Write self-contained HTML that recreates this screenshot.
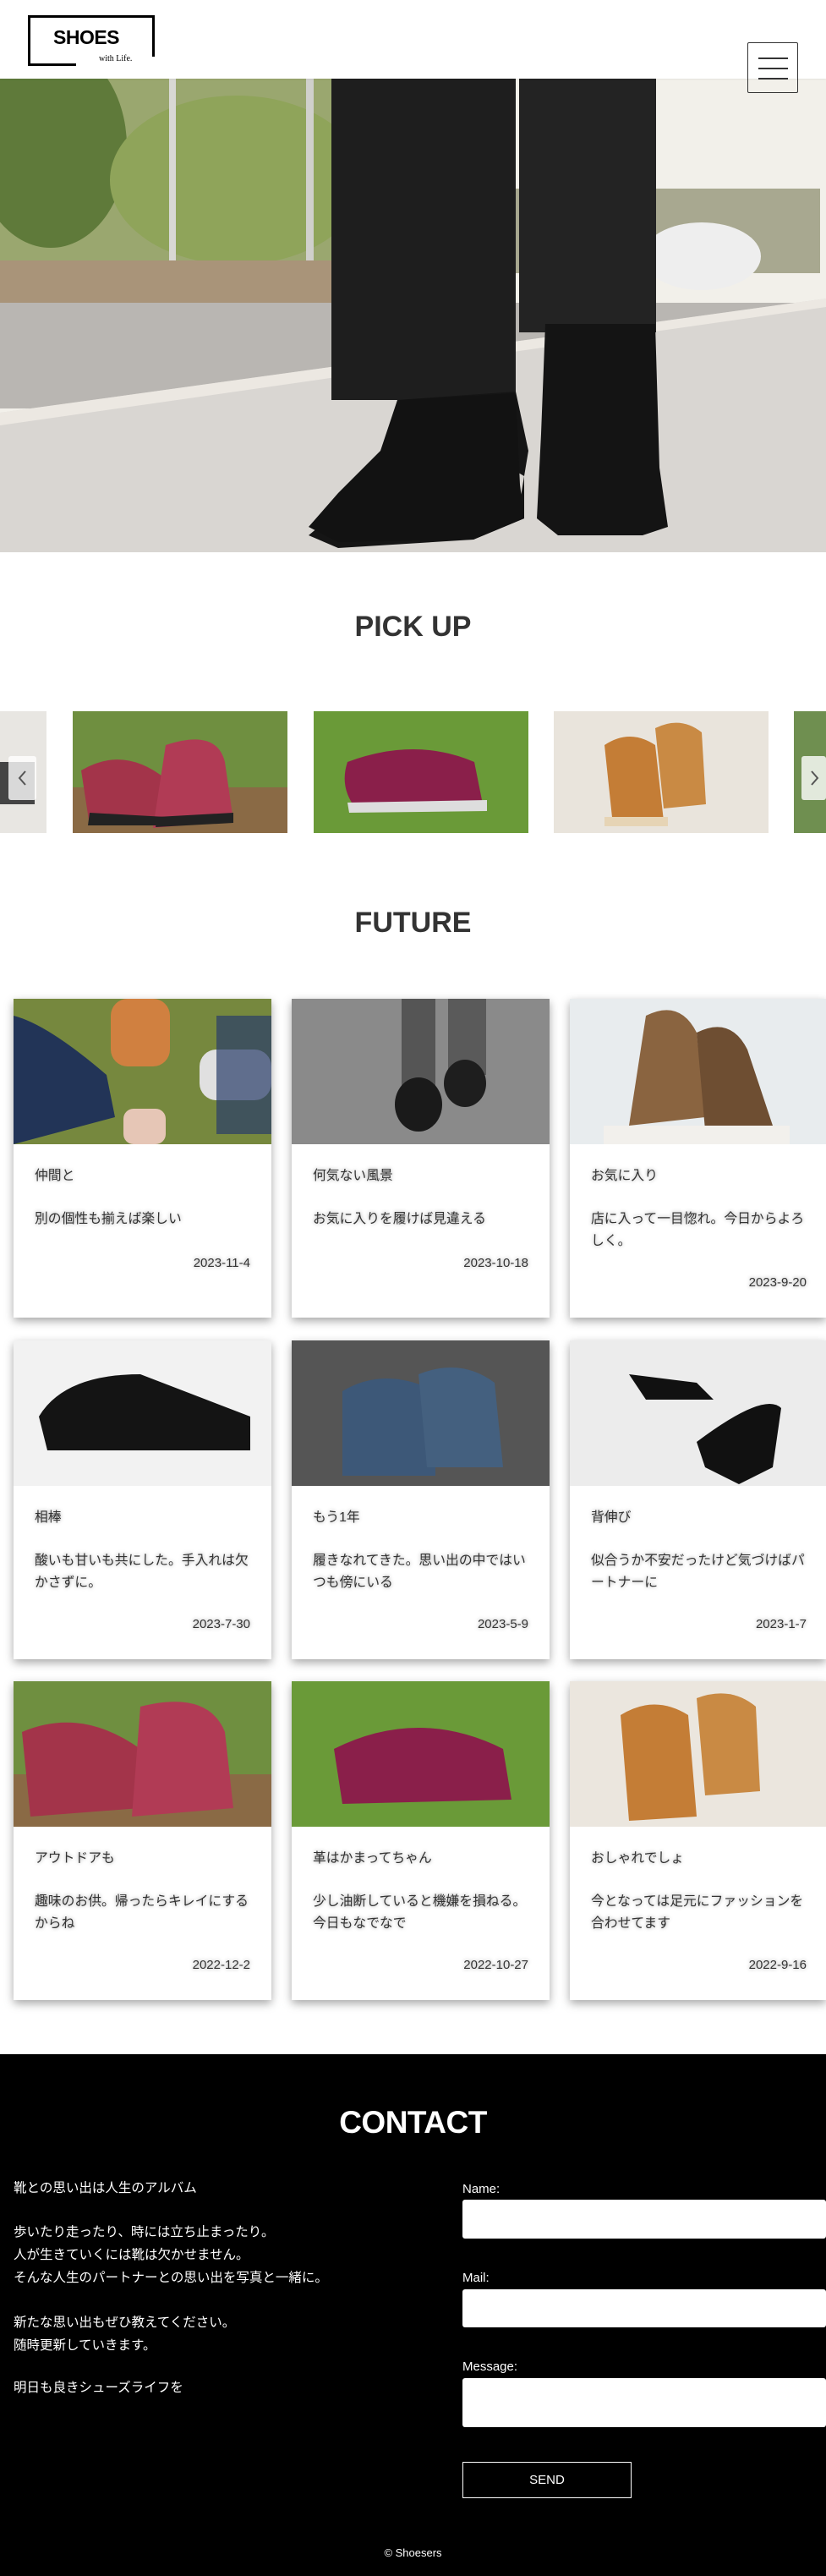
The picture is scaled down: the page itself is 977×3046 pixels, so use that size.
<!DOCTYPE html>
<html><head><meta charset="utf-8">
<style>
*{margin:0;padding:0;box-sizing:border-box}
html,body{width:977px;height:3046px;overflow:hidden}
body{background:#fff;font-family:"Liberation Sans","Noto Sans CJK JP",sans-serif;color:#333;position:relative}
.abs{position:absolute}
header{position:absolute;left:0;top:0;width:977px;height:93px;background:#fff;z-index:3;box-shadow:0 1px 2px rgba(0,0,0,.06)}
.logo{position:absolute;left:33px;top:18px;width:150px;height:60px}
.logo .t{position:absolute;left:0;top:0;width:150px;height:49px;border-top:3px solid #000;border-left:3px solid #000;border-right:3px solid #000}
.logo .b{position:absolute;left:0;top:46px;width:57px;border-left:3px solid #000;height:14px;border-bottom:3px solid #000}
.logo .s{position:absolute;left:30px;top:13px;font-size:23px;font-weight:bold;color:#000;letter-spacing:-0.5px}
.logo .w{position:absolute;left:84px;top:46px;font-family:"Liberation Serif",serif;font-size:10px;color:#000}
.ham{position:absolute;left:884px;top:50px;width:60px;height:60px;border:1px solid #333;border-radius:2px}
.ham i{position:absolute;left:12px;width:35px;height:2px;background:#333}
h2{position:absolute;left:0;width:977px;text-align:center;font-size:34px;font-weight:bold;color:#333}
.sl{position:absolute;top:841px;height:144px;width:254px;overflow:hidden}
.arrow{position:absolute;top:894px;width:33px;height:52px;background:rgba(255,255,255,.8);border-radius:3px}
.card{position:absolute;width:305px;height:377px;background:#fff;box-shadow:0 4px 10px rgba(0,0,0,.35);overflow:hidden}
.card .img{height:172px;overflow:hidden}
.card p{position:absolute;left:25px;font-size:15.8px;color:#333;text-shadow:0 0 5px rgba(0,0,0,.4);line-height:26px;width:256px}
.card .d{right:25px;left:auto;text-align:right;width:auto;font-size:15px}
footer{position:absolute;left:0;top:2429px;width:977px;height:617px;background:#000;color:#fff;overflow:hidden}
.ft{position:absolute;left:16px;font-size:15.5px;color:#fff;line-height:27px}
.lab{position:absolute;left:547px;font-size:15px;color:#fff}
.inp{position:absolute;left:547px;width:430px;background:#fff;border-radius:3px}
</style></head><body>
<header>
 <div class="logo"><div class="t"></div><div class="b"></div><div class="s">SHOES</div><div class="w">with Life.</div></div>
 <div class="ham"><i style="top:17px"></i><i style="top:29px"></i><i style="top:41px"></i></div>
</header>

<svg class="abs" style="left:0;top:93px" width="977" height="560" viewBox="0 0 977 560">
 <rect width="977" height="560" fill="#f2f0ea"/>
 <rect y="0" width="440" height="215" fill="#9aa76f"/>
 <ellipse cx="60" cy="80" rx="90" ry="120" fill="#5f7a3a"/>
 <ellipse cx="280" cy="120" rx="150" ry="100" fill="#8fa45a"/>
 <rect x="200" y="0" width="8" height="215" fill="#d8d8d4"/>
 <rect x="362" y="0" width="9" height="215" fill="#d0d0cc"/>
 <rect x="590" y="130" width="380" height="100" fill="#a8a890"/>
 <ellipse cx="830" cy="210" rx="70" ry="40" fill="#eeeeee"/>
 <rect y="215" width="440" height="50" fill="#a99479"/>
 <rect y="265" width="977" height="125" fill="#b9b6b2"/>
 <polygon points="0,395 977,260 977,560 0,560" fill="#d9d6d2"/>
 <polygon points="0,395 977,260 977,270 0,410" fill="#ece8e2"/>
 <rect x="392" y="0" width="218" height="380" fill="#1e1e1e"/>
 <rect x="614" y="0" width="162" height="300" fill="#232323"/>
 <path d="M470 380 L610 370 L625 440 L615 500 L395 515 L365 540 L400 555 L560 545 L620 520 L620 470 Z" fill="#151515"/>
 <path d="M645 290 L775 290 L780 460 L790 530 L760 540 L660 540 L635 520 L640 420 Z" fill="#141414"/>
 <path d="M470 380 L610 372 L615 480 L620 520 L560 545 L400 548 L365 530 L400 490 L450 440 Z" fill="#121212"/>
</svg>

<h2 style="top:722px">PICK UP</h2>
<div class="sl" style="left:-199px"><svg width="254" height="144"><rect width="254" height="144" fill="#e8e6e2"/><rect x="180" y="60" width="60" height="50" fill="#444"/></svg></div>
<div class="sl" style="left:86px"><svg width="254" height="144"><rect width="254" height="144" fill="#6f8f40"/><rect y="90" width="254" height="54" fill="#8a6a45"/><path d="M10 70 Q60 40 110 80 L115 130 L20 135 Z" fill="#a3344a"/><path d="M110 40 Q170 20 180 60 L190 130 L95 138 Z" fill="#b13b55"/><path d="M20 120 L110 125 L112 135 L18 135Z" fill="#222"/><path d="M100 125 L190 120 L190 132 L98 137Z" fill="#222"/></svg></div>
<div class="sl" style="left:371px"><svg width="254" height="144"><rect width="254" height="144" fill="#6a9a38"/><path d="M40 60 Q120 30 190 60 L200 110 L50 115 Q30 90 40 60Z" fill="#8a1f4a"/><path d="M40 108 L205 105 L205 118 L42 120Z" fill="#ddd"/></svg></div>
<div class="sl" style="left:655px"><svg width="254" height="144"><rect width="254" height="144" fill="#e9e4dc"/><path d="M60 40 Q90 20 120 40 L130 130 L70 135Z" fill="#c47d36"/><path d="M120 20 Q150 5 175 25 L180 110 L130 115Z" fill="#c98a44"/><path d="M60 125 L135 125 L135 136 L60 136Z" fill="#e6d4b5"/></svg></div>
<div class="sl" style="left:939px;width:38px"><svg width="38" height="144"><rect width="38" height="144" fill="#6f8f50"/></svg></div>
<div class="arrow" style="left:10px"><svg width="33" height="52"><path d="M20 18 L13 26 L20 34" stroke="#555" stroke-width="2" fill="none"/></svg></div>
<div class="arrow" style="left:948px;width:29px"><svg width="29" height="52"><path d="M12 18 L19 26 L12 34" stroke="#555" stroke-width="2" fill="none"/></svg></div>

<h2 style="top:1072px">FUTURE</h2>

<div class="card" style="left:16px;top:1181px"><div class="img"><svg width="305" height="172"><rect width="305" height="172" fill="#76883e"/><path d="M0 20 Q40 30 110 90 L120 140 L0 172Z" fill="#223457"/><rect x="115" y="0" width="70" height="80" rx="20" fill="#d08040"/><rect x="220" y="60" width="85" height="60" rx="20" fill="#e0e0e0"/><rect x="240" y="20" width="65" height="140" fill="#2a3d6a" opacity=".7"/><rect x="130" y="130" width="50" height="42" rx="12" fill="#e6c6b6"/></svg></div><p style="top:197px">仲間と</p><p style="top:248px">別の個性も揃えば楽しい</p><p class="d" style="top:300px">2023-11-4</p></div>
<div class="card" style="left:345px;top:1181px"><div class="img"><svg width="305" height="172"><rect width="305" height="172" fill="#8a8a8a"/><rect x="130" y="0" width="40" height="110" fill="#555"/><rect x="185" y="0" width="45" height="90" fill="#5a5a5a"/><ellipse cx="150" cy="125" rx="28" ry="32" fill="#1a1a1a"/><ellipse cx="205" cy="100" rx="25" ry="28" fill="#1e1e1e"/></svg></div><p style="top:197px">何気ない風景</p><p style="top:248px">お気に入りを履けば見違える</p><p class="d" style="top:300px">2023-10-18</p></div>
<div class="card" style="left:674px;top:1181px;width:303px"><div class="img"><svg width="305" height="172"><rect width="305" height="172" fill="#e8ecee"/><path d="M90 20 Q130 0 150 40 L160 140 L70 150Z" fill="#8a6440"/><path d="M150 40 Q190 20 210 60 L240 150 L160 155Z" fill="#6e4e32"/><rect x="40" y="150" width="220" height="22" fill="#f2f0ec"/></svg></div><p style="top:197px">お気に入り</p><p style="top:248px">店に入って一目惚れ。今日からよろしく。</p><p class="d" style="top:323px;right:23px">2023-9-20</p></div>

<div class="card" style="left:16px;top:1585px"><div class="img"><svg width="305" height="172"><rect width="305" height="172" fill="#f2f2f2"/><path d="M30 90 Q60 40 150 40 L280 90 L280 130 L40 130Z" fill="#141414"/></svg></div><p style="top:197px">相棒</p><p style="top:248px">酸いも甘いも共にした。手入れは欠かさずに。</p><p class="d" style="top:323px">2023-7-30</p></div>
<div class="card" style="left:345px;top:1585px"><div class="img"><svg width="305" height="172"><rect width="305" height="172" fill="#555"/><path d="M60 60 Q110 30 170 60 L170 160 L60 160Z" fill="#3d5878"/><path d="M150 40 Q200 20 240 50 L250 150 L160 150Z" fill="#44607f"/></svg></div><p style="top:197px">もう1年</p><p style="top:248px">履きなれてきた。思い出の中ではいつも傍にいる</p><p class="d" style="top:323px">2023-5-9</p></div>
<div class="card" style="left:674px;top:1585px;width:303px"><div class="img"><svg width="305" height="172"><rect width="305" height="172" fill="#ececec"/><path d="M70 40 L150 50 L170 70 L90 70Z" fill="#111"/><path d="M150 120 Q230 60 250 80 L240 150 L200 170 L160 150Z" fill="#111"/></svg></div><p style="top:197px">背伸び</p><p style="top:248px">似合うか不安だったけど気づけばパートナーに</p><p class="d" style="top:323px;right:23px">2023-1-7</p></div>

<div class="card" style="left:16px;top:1988px"><div class="img"><svg width="305" height="172"><rect width="305" height="172" fill="#6f8f40"/><rect y="110" width="305" height="62" fill="#8a6a45"/><path d="M10 60 Q80 30 150 80 L150 150 L20 160Z" fill="#a3344a"/><path d="M150 30 Q230 10 250 60 L260 150 L140 160Z" fill="#b13b55"/></svg></div><p style="top:197px">アウトドアも</p><p style="top:248px">趣味のお供。帰ったらキレイにするからね</p><p class="d" style="top:323px">2022-12-2</p></div>
<div class="card" style="left:345px;top:1988px"><div class="img"><svg width="305" height="172"><rect width="305" height="172" fill="#6a9a38"/><path d="M50 80 Q150 30 250 80 L260 140 L60 145Z" fill="#8a1f4a"/></svg></div><p style="top:197px">革はかまってちゃん</p><p style="top:248px">少し油断していると機嫌を損ねる。今日もなでなで</p><p class="d" style="top:323px">2022-10-27</p></div>
<div class="card" style="left:674px;top:1988px;width:303px"><div class="img"><svg width="305" height="172"><rect width="305" height="172" fill="#ebe6de"/><path d="M60 40 Q100 15 140 40 L150 160 L70 165Z" fill="#c47d36"/><path d="M150 20 Q190 5 220 30 L225 130 L160 135Z" fill="#c98a44"/></svg></div><p style="top:197px">おしゃれでしょ</p><p style="top:248px">今となっては足元にファッションを合わせてます</p><p class="d" style="top:323px;right:23px">2022-9-16</p></div>

<footer>
 <div class="abs" style="left:0;top:60px;width:977px;text-align:center;font-size:37px;font-weight:bold;color:#fff;letter-spacing:-0.5px">CONTACT</div>
 <div class="ft" style="top:145px">靴との思い出は人生のアルバム</div>
 <div class="ft" style="top:197px">歩いたり走ったり、時には立ち止まったり。<br>人が生きていくには靴は欠かせません。<br>そんな人生のパートナーとの思い出を写真と一緒に。</div>
 <div class="ft" style="top:304px">新たな思い出もぜひ教えてください。<br>随時更新していきます。</div>
 <div class="ft" style="top:381px">明日も良きシューズライフを</div>
 <div class="lab" style="top:151px">Name:</div>
 <div class="inp" style="top:172px;height:46px"></div>
 <div class="lab" style="top:256px">Mail:</div>
 <div class="inp" style="top:278px;height:45px"></div>
 <div class="lab" style="top:361px">Message:</div>
 <div class="inp" style="top:383px;height:58px"></div>
 <div class="abs" style="left:547px;top:482px;width:200px;height:43px;border:1px solid #fff;color:#fff;font-size:15px;text-align:center;line-height:41px">SEND</div>
 <div class="abs" style="left:0;top:582px;width:977px;text-align:center;font-size:13px;color:#fff">© Shoesers</div>
</footer>
</body></html>
